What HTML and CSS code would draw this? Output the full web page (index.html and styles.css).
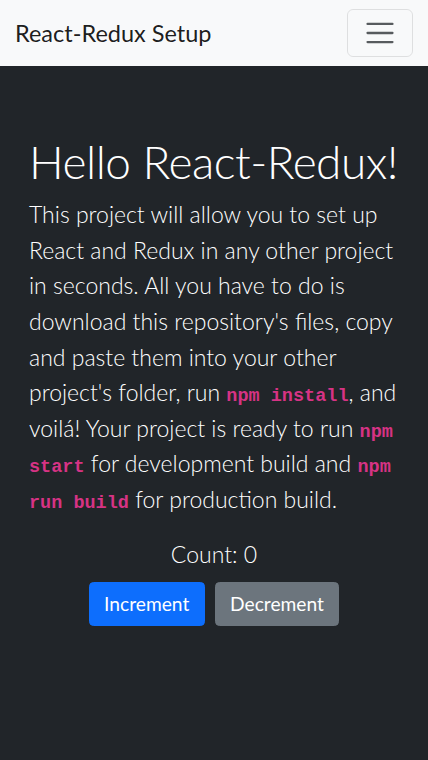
FILE: index.html
```html
<!DOCTYPE html>
<html lang="en">
<head>
<meta charset="utf-8">
<title>React-Redux Setup</title>
<link rel="stylesheet" href="styles.css">
</head>
<body>
<nav class="navbar">
  <a class="brand" href="#">React-Redux Setup</a>
  <button class="toggler" aria-label="Toggle navigation">
    <svg class="toggler-icon" viewBox="0 0 30 30" width="34" height="34">
      <path stroke="rgba(33,37,41,0.75)" stroke-linecap="round" stroke-miterlimit="10" stroke-width="2" d="M4 7h22M4 15h22M4 23h22"/>
    </svg>
  </button>
</nav>
<main class="main">
  <h1 class="title">Hello React-Redux!</h1>
  <p class="lead">This project will allow you to set up<br>React and Redux in any other project<br>in seconds. All you have to do is<br>download this repository's files, copy<br>and paste them into your other<br>project's folder, run <code>npm install</code>, and<br>voilá! Your project is ready to run <code>npm<br>start</code> for development build and <code>npm<br>run build</code> for production build.</p>
  <div class="counter">
    <p class="count">Count: 0</p>
    <div class="buttons">
      <button class="btn btn-primary">Increment</button>
      <button class="btn btn-secondary">Decrement</button>
    </div>
  </div>
</main>
</body>
</html>
```
FILE: styles.css
```css
* { box-sizing: border-box; }
html, body { margin: 0; padding: 0; height: 100%; }
body {
  background: #212529;
  color: #fff;
  font-family: "Lato", "Open Sans", sans-serif;
  font-size: 19.2px;
  line-height: 1.5;
}
.navbar {
  background: #f8f9fa;
  height: 66px;
  display: flex;
  align-items: center;
  justify-content: space-between;
  padding: 0 15px;
}
.brand {
  color: rgba(0,0,0,0.9);
  text-decoration: none;
  font-size: 23.5px;
  line-height: 1.5;
  margin-top: 2px;
}
.toggler {
  width: 66px;
  height: 48px;
  background: transparent;
  border: 1px solid rgba(0,0,0,0.1);
  border-radius: 6px;
  display: flex;
  align-items: center;
  justify-content: center;
  padding: 0;
}
.toggler-icon { display: block; }
.main {
  padding: 68px 29px 40px;
}
.title {
  margin: 0 0 8px;
  font-size: 46px;
  font-weight: 300;
  letter-spacing: -0.5px;
  line-height: 1.2;
  white-space: nowrap;
}
.lead {
  margin: 0 0 19px;
  font-size: 23px;
  font-weight: 300;
  line-height: 35.6px;
  white-space: nowrap;
}
code {
  font-family: "Liberation Mono", "DejaVu Sans Mono", monospace;
  font-size: 18.5px;
  line-height: 1;
  color: #d63384;
  font-weight: 700;
}
.counter {
  display: flex;
  flex-direction: column;
  align-items: center;
}
.count {
  margin: 0 0 10px;
  font-size: 23px;
  font-weight: 300;
  line-height: 35.6px;
}
.buttons {
  display: flex;
  gap: 10px;
}
.btn {
  font-family: inherit;
  font-size: 19.2px;
  line-height: 1.5;
  padding: 6.6px 14.4px;
  border-radius: 4.5px;
  border: 1px solid transparent;
  color: #fff;
}
.btn-primary { background: #0d6efd; border-color: #0d6efd; }
.btn-secondary { background: #6c757d; border-color: #6c757d; }
```
